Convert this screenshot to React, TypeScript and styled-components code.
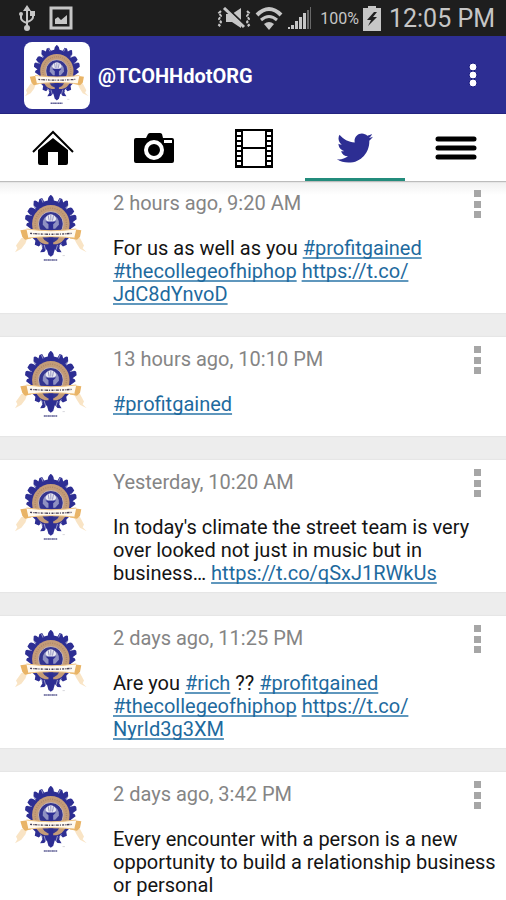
import React from "react";
import styled, { createGlobalStyle } from "styled-components";
import { FaTwitter } from "react-icons/fa";

const GlobalStyle = createGlobalStyle`
  *, *::before, *::after { box-sizing: border-box; }
  html { height: 100%; overflow: hidden; }
  body {
    margin: 0;
    background: #ededed;
    font-family: Roboto, "Noto Sans", sans-serif;
    color: #141414;
  }
`;

const navy = "#2d2e93";

const Screen = styled.div`
  display: flex;
  flex-direction: column;
`;

const StatusBar = styled.div`
  display: flex;
  align-items: center;
  justify-content: space-between;
  height: 36px;
  padding: 0 11px 0 18px;
  background: #1e1e1e;
  color: #c6c6c6;
`;

const StatusGroup = styled.div<{ $gap: number }>`
  display: flex;
  align-items: center;
  gap: ${(p) => p.$gap}px;
`;

const BatteryLevel = styled.span`
  padding: 2px 0 0 4px;
  font-size: 16px;
  line-height: 24px;
`;

const Clock = styled.time`
  padding: 2px 0 0 4px;
  font-size: 25px;
  line-height: 34px;
`;

const Header = styled.header`
  display: flex;
  align-items: center;
  gap: 8px;
  height: 78px;
  padding: 1px 22px 0 24px;
  background: ${navy};
  border-bottom: 1px solid #24247f;
`;

const LogoTile = styled.div`
  display: flex;
  align-items: center;
  justify-content: center;
  width: 66px;
  height: 67px;
  border-radius: 8px;
  background: #fff;
`;

const Title = styled.h1`
  flex: 1;
  margin: 0;
  padding-top: 2px;
  font-size: 20px;
  line-height: 24px;
  font-weight: 700;
  color: #fff;
`;

const IconButton = styled.button`
  display: flex;
  padding: 0;
  border: 0;
  background: none;
  cursor: pointer;
`;

const Tabs = styled.nav`
  display: flex;
  height: 69px;
  padding-left: 3px;
  background: #fff;
  border-bottom: 2px solid #b4b4b4;
`;

const Tab = styled.button<{ $active?: boolean }>`
  display: flex;
  flex: 1;
  align-items: center;
  justify-content: center;
  padding: 4px 0 0;
  border: 0;
  border-bottom: 3px solid ${(p) => (p.$active ? "#238c7c" : "transparent")};
  background: none;
  color: ${(p) => (p.$active ? navy : "#000")};
  cursor: pointer;
`;

const Feed = styled.main`
  display: flex;
  flex-direction: column;
  gap: 24px;
  background: #ededed;
`;

const Card = styled.article`
  display: flex;
  align-items: flex-start;
  padding: 8px 24px 7px 15px;
  background: #fff;
  box-shadow: 0 0 1px 1px #e6e6e6;

  &:first-child {
    padding-top: 6px;
    background: linear-gradient(#f1f1f1, #fff 12px);
  }
`;

const Avatar = styled.div`
  display: flex;
  padding: 5px 0 10px;
`;

const Content = styled.div`
  flex: 1;
  min-width: 0;
  padding: 3px 0 0 26px;
`;

const Posted = styled.time`
  display: block;
  margin-bottom: 22px;
  font-size: 20px;
  line-height: 23px;
  color: #858585;
`;

const Message = styled.p`
  margin: 0 -24px 0 0;
  font-size: 20px;
  line-height: 23px;
  overflow-wrap: break-word;
`;

const Link = styled.a`
  color: #1e6a9e;
  text-decoration: underline;
  text-decoration-color: #5f97bd;
  text-decoration-thickness: 2px;
  text-decoration-skip-ink: none;
  text-underline-offset: 2px;
`;

const leafHalf =
  "M151 48h1Q161 53 161 64L172 67L178 57L186 60L189 70Q198 62 203 66L204 80L197 91Q210 82 216 87L222 97L213 108Q225 104 228 110L229 120L217 129Q225 131 226 138L212 148L206 176L198 184L200 196L188 201L181 194L177 206L184 218L172 217L164 209L159 226L152 231h-1Z";

function Emblem({ width, height }: { width: number; height: number }) {
  return (
    <svg width={width} height={height} viewBox="45 45 215 205" preserveAspectRatio="none" aria-hidden="true">
      <path fill={navy} d={leafHalf} />
      <path fill={navy} d={leafHalf} transform="translate(304 0) scale(-1 1)" />
      <g fill="none" stroke="#fff" strokeWidth="3" opacity=".5">
        <path d="M98 78l10 9M206 78l-10 9M82 106l13 3M222 106l-13 3M124 60l5 10M180 60l-5 10" />
        <path d="M132 196l6 20M172 196l-6 20M120 192l8 9M184 192l-8 9" />
      </g>
      <circle cx="152" cy="134" r="56" fill="#c49c78" />
      <circle cx="152" cy="134" r="47" fill="none" stroke="#94745e" strokeWidth="4" strokeDasharray="3 4" opacity=".5" />
      <circle cx="152" cy="134" r="37" fill="#34358f" stroke="#ecdccb" strokeWidth="2" />
      <path fill="#8f91c2" d="M128 136q-3-24 24-30 27 6 24 30l-11 12h-26z" />
      <path fill="#ececf4" d="M136 120q2-14 16-15 14 1 16 15l-8 8h-16z" />
      <path fill="none" stroke="#6668a5" strokeWidth="2" d="M152 106v18M144 108l3 16M160 108l-3 16" />
      <path fill={navy} d="M136 127h32l-9 8v18h-14v-18z" />
      <path fill="#f7d9ad" d="M64 176l-16 22 4 8-7 12 19-10 12-16 6-17zM239 176l12 22-4 8 12 12-20-10-10-16-9-17z" opacity=".7" />
      <path fill="#e9b466" d="M61 153l27-4 5 28-18 4-8-8zM243 153l-28-4-6 28 21 4 9-8z" />
      <path fill="#c49c78" d="M108 172h88q-8 18-27 22h-34q-19-4-27-22z" />
      <path fill="#34358f" d="M126 172h52q-6 12-17 16h-18q-11-4-17-16z" />
      <path fill="#fffaf0" d="M79 149q73 10 149 0l-6 27q-69-8-137 0z" />
      <path fill="none" stroke="#efc486" strokeWidth="3" d="M79 149q73 10 149 0M85 176q68-8 137 0" />
      <path fill="none" stroke="#4a4257" strokeWidth="4" strokeDasharray="6 3 2 2 9 3 3 4" d="M90 162q62 5 124 0" />
      <path fill={navy} d="M145 174h14v34l-7 15-7-15z" />
      <path stroke="#5c5c93" strokeWidth="5" strokeDasharray="6 1 4 1" d="M131 241h40" />
      <path stroke="#c4c4cc" strokeWidth="2" d="M187 228h7" />
    </svg>
  );
}

const UsbIcon = () => (
  <svg width="18" height="26" viewBox="0 0 18 26" fill="none" stroke="currentColor" strokeWidth="2" aria-hidden="true">
    <path d="M9 4v19M3 8v5q0 3 6 5M15 9v3q0 3-6 5" />
    <path fill="currentColor" stroke="none" d="M9 0l4 6H5zM12 6h5v5h-5z" />
    <circle cx="3" cy="9" r="2" fill="currentColor" stroke="none" />
    <circle cx="9" cy="23" r="3" fill="currentColor" stroke="none" />
  </svg>
);

const PictureIcon = () => (
  <svg width="24" height="24" viewBox="0 0 24 24" aria-hidden="true">
    <rect x="2" y="2" width="20" height="20" fill="none" stroke="currentColor" strokeWidth="3" />
    <path fill="currentColor" d="M6 18v-5l3-2 3 3 6-5v9z" />
  </svg>
);

const MuteIcon = () => (
  <svg width="34" height="22" viewBox="0 0 34 22" aria-hidden="true">
    <path fill="currentColor" d="M9 7h6l9-6v20l-9-6H9z" />
    <path stroke="#1e1e1e" strokeWidth="2" d="M9 0l20 19" />
    <path stroke="currentColor" strokeWidth="3" d="M7 1l20 19" />
    <path fill="none" stroke="currentColor" strokeWidth="2" strokeDasharray="3 1" d="M4 4L2 6l2 3-2 3 2 3-2 3 2 2M30 4l2 2-2 3 2 3-2 3 2 3-2 2" />
  </svg>
);

const WifiIcon = () => (
  <svg width="28" height="24" viewBox="0 0 28 24" fill="none" stroke="currentColor" strokeWidth="4" aria-hidden="true">
    <path d="M2 9q12-12 24 0" />
    <path strokeWidth="3" d="M6 14q8-7 16 0" />
    <path fill="currentColor" stroke="none" d="M9 18q5-4 10 0l-5 6z" />
  </svg>
);

const SignalIcon = () => (
  <svg width="25" height="24" viewBox="0 0 25 24" fill="currentColor" aria-hidden="true">
    <path d="M1 21h2v2H1zM4 19h3v4H4zM8 15h3v8H8zM12 11h3v12h-3zM16 7h3v16h-3z" />
    <path opacity=".45" d="M20 4h2v19h-2zM23 1h1v22h-1z" />
  </svg>
);

const BatteryIcon = () => (
  <svg width="18" height="25" viewBox="0 0 18 25" aria-hidden="true">
    <path fill="currentColor" d="M5 0h8v2h5v23H0V2h5z" />
    <path fill="#1e1e1e" d="M11 6l-7 8h4l-3 6 9-9h-4l4-5z" />
  </svg>
);

const HomeIcon = () => (
  <svg width="42" height="38" viewBox="0 0 42 38" aria-hidden="true">
    <path d="M6 21L21 9l15 12v13q0 2-2 2h-8V23H16v13H8q-2 0-2-2z" />
    <path fill="none" stroke="#000" strokeWidth="2" d="M1 23L21 3l20 20" />
  </svg>
);

const CameraIcon = () => (
  <svg width="40" height="30" viewBox="0 0 40 30" aria-hidden="true">
    <path d="M2 5h10l2-4q1-1 2-1h10q1 0 2 1l1 4h9q2 0 2 2v21q0 2-2 2H2q-2 0-2-2V7q0-2 2-2z" />
    <circle cx="20" cy="17" r="8" fill="#000" stroke="#fff" strokeWidth="4" />
    <path fill="#fff" d="M30 7h8v3h-8z" />
  </svg>
);

const FilmIcon = () => (
  <svg width="38" height="39" viewBox="0 0 38 39" aria-hidden="true">
    <path fillRule="evenodd" d="M0 0h38v39H0zM8 2h22v16H8zM8 20h22v17H8z" />
    <path stroke="#fff" strokeWidth="4" strokeDasharray="3 2" d="M4 3v33M34 3v33" />
  </svg>
);

const MenuIcon = () => (
  <svg width="42" height="24" viewBox="0 0 42 24" stroke="currentColor" strokeWidth="5" strokeLinecap="round" aria-hidden="true">
    <path d="M3 3h36M3 12h36M3 21h36" />
  </svg>
);

const RoundDots = () => (
  <svg width="22" height="26" viewBox="0 0 22 26" aria-hidden="true">
    <g fill="#fff" stroke="#181a80" strokeWidth="1">
      <circle cx="11" cy="5" r="4" />
      <circle cx="11" cy="13" r="4" />
      <circle cx="11" cy="21" r="4" />
    </g>
  </svg>
);

const SquareDots = () => (
  <svg width="9" height="30" viewBox="0 0 9 30" fill="#a6a6a6" aria-hidden="true">
    <path d="M1 1h7v7H1zM1 12h7v7H1zM1 22h7v7H1z" />
  </svg>
);

type Part = string | { link: string };

const tweets: { posted: string; parts: Part[] }[] = [
  {
    posted: "2 hours ago, 9:20 AM",
    parts: ["For us as well as you ", { link: "#profitgained" }, " ", { link: "#thecollegeofhiphop" }, " ", { link: "https://t.co/JdC8dYnvoD" }],
  },
  { posted: "13 hours ago, 10:10 PM", parts: [{ link: "#profitgained" }] },
  {
    posted: "Yesterday, 10:20 AM",
    parts: ["In today's climate the street team is very over looked not just in music but in business… ", { link: "https://t.co/qSxJ1RWkUs" }],
  },
  {
    posted: "2 days ago, 11:25 PM",
    parts: ["Are you ", { link: "#rich" }, " ?? ", { link: "#profitgained" }, " ", { link: "#thecollegeofhiphop" }, " ", { link: "https://t.co/NyrId3g3XM" }],
  },
  {
    posted: "2 days ago, 3:42 PM",
    parts: ["Every encounter with a person is a new opportunity to build a relationship business or personal"],
  },
];

/* A zero-width space lets a long URL break after its last slash. */
const breakable = (url: string) => url.replace(/\/(?=[^/]+$)/, "/\u200b");

export default function App() {
  return (
    <Screen>
      <GlobalStyle />
      <StatusBar>
        <StatusGroup $gap={13}>
          <UsbIcon />
          <PictureIcon />
        </StatusGroup>
        <StatusGroup $gap={4}>
          <MuteIcon />
          <WifiIcon />
          <SignalIcon />
          <BatteryLevel>100%</BatteryLevel>
          <BatteryIcon />
          <Clock>12:05 PM</Clock>
        </StatusGroup>
      </StatusBar>
      <Header>
        <LogoTile>
          <Emblem width={64} height={62} />
        </LogoTile>
        <Title>@TCOHHdotORG</Title>
        <IconButton aria-label="More options">
          <RoundDots />
        </IconButton>
      </Header>
      <Tabs>
        <Tab aria-label="Home"><HomeIcon /></Tab>
        <Tab aria-label="Photos"><CameraIcon /></Tab>
        <Tab aria-label="Videos"><FilmIcon /></Tab>
        <Tab aria-label="Twitter" $active><FaTwitter size={36} /></Tab>
        <Tab aria-label="Menu"><MenuIcon /></Tab>
      </Tabs>
      <Feed>
        {tweets.map((tweet) => (
          <Card key={tweet.posted}>
            <Avatar>
              <Emblem width={72} height={69} />
            </Avatar>
            <Content>
              <Posted>{tweet.posted}</Posted>
              <Message>
                {tweet.parts.map((part, i) =>
                  typeof part === "string" ? part : <Link key={i} href={part.link}>{breakable(part.link)}</Link>
                )}
              </Message>
            </Content>
            <IconButton aria-label="Tweet options">
              <SquareDots />
            </IconButton>
          </Card>
        ))}
      </Feed>
    </Screen>
  );
}
